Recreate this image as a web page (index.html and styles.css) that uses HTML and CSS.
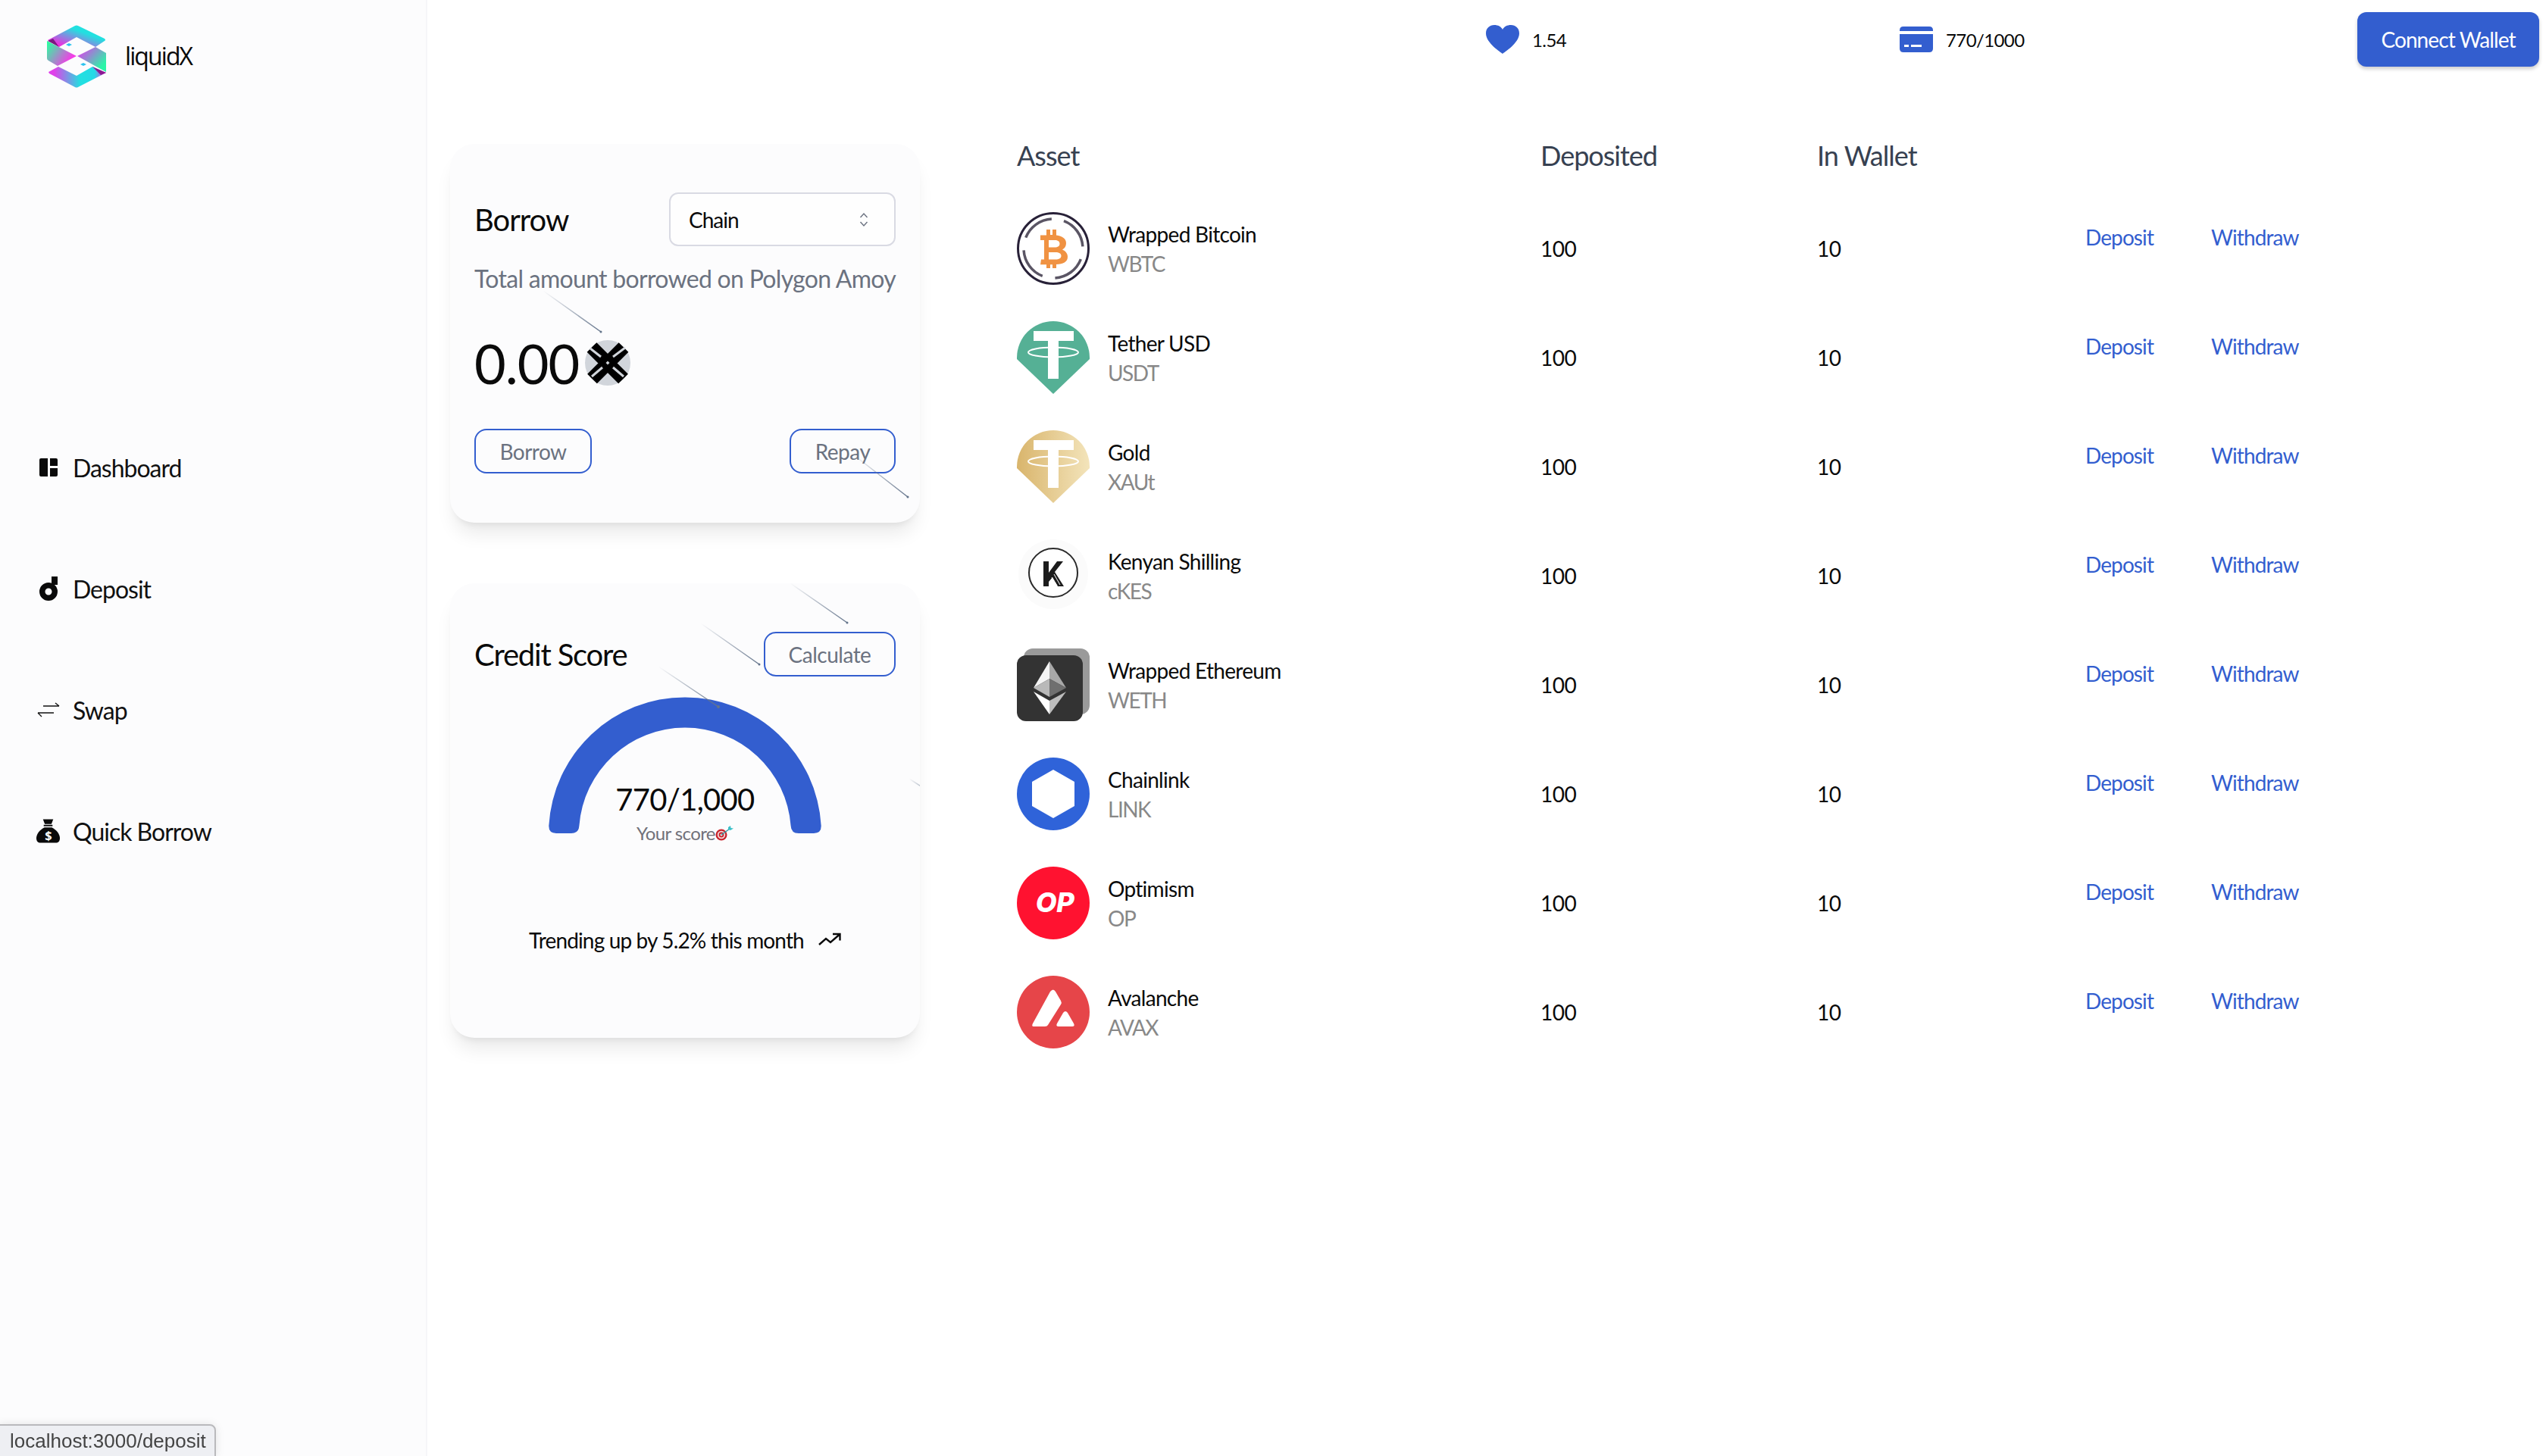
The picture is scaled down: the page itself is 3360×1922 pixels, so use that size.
FILE: index.html
```html
<!DOCTYPE html>
<html lang="en">
<head>
<meta charset="utf-8">
<title>liquidX</title>
<link rel="stylesheet" href="styles.css">
</head>
<body>
<div class="app">
  <aside class="sidebar">
    <div class="brand">
      <svg class="brand-logo" viewBox="62 33 78 83" width="78" height="83">
        <defs>
          <linearGradient id="lgA" x1="0" y1="1" x2="1" y2="0"><stop offset="0.1" stop-color="#ff1fe0"/><stop offset="0.65" stop-color="#22e0e0"/></linearGradient>
          <linearGradient id="lgB" x1="0" y1="0" x2="1" y2="0.6"><stop offset="0.05" stop-color="#2bff9f"/><stop offset="0.9" stop-color="#f23ee6"/></linearGradient>
          <linearGradient id="lgC" x1="0" y1="0.1" x2="1" y2="0.9"><stop offset="0.1" stop-color="#d04be8"/><stop offset="0.85" stop-color="#2bf5a8"/></linearGradient>
          <linearGradient id="lgD" x1="0" y1="0" x2="1" y2="0"><stop offset="0.1" stop-color="#e040ea"/><stop offset="0.55" stop-color="#22e0e0"/><stop offset="0.8" stop-color="#25d9e6"/><stop offset="1" stop-color="#f92be0"/></linearGradient>
        </defs>
        <path d="M99 34 Q101 33 103 34 L138 51 Q140 53 138 54 L126 62 L101 49 L78 62 L63 53 Z" fill="url(#lgA)"/>
        <path d="M62 54 L101 74 L76 87 L64 80 Q62 79 62 77 Z" fill="url(#lgB)"/>
        <path d="M63 54 L70 51 L78 62 Z" fill="#7a1a80"/>
        <path d="M102 74 L126 62 L140 70 L140 95 Z" fill="url(#lgC)"/>
        <path d="M64 95 L77 88 L101 100 L122 88 L140 96 L103 115 Q101 116 99 115 L65 97 Z" fill="url(#lgD)"/>
        <path d="M122 88 L140 96 L133 99 Z" fill="#8a1a90"/>
        <path d="M91 57 L95 59 L91 61 L87 59 Z M110 83 L114 85 L110 87 L106 85 Z" fill="#2cc4ee"/>
      </svg>
      <span class="brand-name">liquidX</span>
    </div>
    <nav class="nav">
      <a class="nav-item">
        <span class="nav-icon"><svg viewBox="0 0 24 24" width="24" height="24"><path d="M2 0H11V24H2Q0 24 0 22V2Q0 0 2 0ZM14 0H22Q24 0 24 2V10H14ZM14 13H24V22Q24 24 22 24H14Z" fill="#0a0a0a"/></svg></span>
        <span>Dashboard</span>
      </a>
      <a class="nav-item">
        <span class="nav-icon"><svg viewBox="0 0 24 32" width="24" height="32"><path fill-rule="evenodd" d="M12 8A12 12 0 1 1 12 32A12 12 0 1 1 12 8ZM12 15.500A4.500 4.500 0 1 0 12 24.500A4.500 4.500 0 1 0 12 15.500Z" fill="#0a0a0a"/><rect x="16" y="0" width="8" height="11" fill="#0a0a0a"/></svg></span>
        <span>Deposit</span>
      </a>
      <a class="nav-item">
        <span class="nav-icon"><svg viewBox="0 0 30 20" width="30" height="20"><path d="M8 5H29M24 1L29 5M1 14H22M1 14L6 19" fill="none" stroke="#111" stroke-width="1.300"/></svg></span>
        <span>Swap</span>
      </a>
      <a class="nav-item">
        <span class="nav-icon"><svg viewBox="0 0 32 32" width="32" height="32"><path d="M9 0H23L20.500 6.500H11.500Z" fill="#0a0a0a"/><rect x="10" y="7.500" width="12" height="2" fill="#0a0a0a"/><path d="M11 11H21C27 14 32 20 32 25.500C32 30 30 32 26 32H6C2 32 0 30 0 25.500C0 20 5 14 11 11Z" fill="#0a0a0a"/><text x="16" y="28" class="bag-sign">$</text></svg></span>
        <span>Quick Borrow</span>
      </a>
    </nav>
  </aside>

  <div class="main">
    <header class="topbar">
      <div class="stat stat-health">
        <svg viewBox="0 0 44 38" width="44" height="38"><path d="M22 38C20 36 0 24 0 11C0 4 5 0 11 0C16 0 20 2 22 6C24 2 28 0 33 0C39 0 44 4 44 11C44 24 24 36 22 38Z" fill="#335ecf"/></svg>
        <span>1.54</span>
      </div>
      <div class="stat stat-score">
        <svg viewBox="0 0 44 34" width="44" height="34"><path d="M5 0H39Q44 0 44 5V6H0V5Q0 0 5 0ZM0 10H44V29Q44 34 39 34H5Q0 34 0 29ZM6 24V27H12V24ZM15 24V27H29V24Z" fill="#335ecf" fill-rule="evenodd"/></svg>
        <span>770/1000</span>
      </div>
      <button class="connect">Connect Wallet</button>
    </header>

    <div class="content">
      <div class="cards">
        <section class="card card-borrow">
          <svg class="meteors" viewBox="0 0 620 500" aria-hidden="true">
            <defs>
              <linearGradient id="m1" gradientUnits="userSpaceOnUse" x1="123" y1="194" x2="199" y2="248"><stop offset="0" stop-color="#64748b" stop-opacity="0"/><stop offset="1" stop-color="#64748b"/></linearGradient>
              <linearGradient id="m2" gradientUnits="userSpaceOnUse" x1="532" y1="410" x2="604" y2="466"><stop offset="0" stop-color="#64748b" stop-opacity="0"/><stop offset="1" stop-color="#64748b"/></linearGradient>
            </defs>
            <line x1="123" y1="194" x2="199" y2="248" stroke="url(#m1)" stroke-width="1.500"/><circle cx="199" cy="248" r="1.500" fill="#64748b"/>
            <line x1="532" y1="410" x2="604" y2="466" stroke="url(#m2)" stroke-width="1.500"/><circle cx="604" cy="466" r="1.500" fill="#64748b"/>
          </svg>
          <div class="card-row borrow-head">
            <h2 class="card-title">Borrow</h2>
            <div class="select"><span>Chain</span>
              <svg viewBox="0 0 12 20" width="12" height="20"><path d="M1.500 7L6 2L10.500 7M1.500 13L6 18L10.500 13" fill="none" stroke="#6b7280" stroke-width="1.400"/></svg>
            </div>
          </div>
          <p class="card-sub">Total amount borrowed on Polygon Amoy</p>
          <div class="amount">
            <span>0.00</span>
            <svg viewBox="0 0 60 60" width="60" height="60">
              <circle cx="30" cy="30" r="30" fill="#d1d5db"/>
              <path d="M9 9.500L50.500 51M51 9.500L9.500 51" stroke="#000" stroke-width="18" fill="none"/>
              <path d="M7 11L21 22M53 10L37 22M9 48L23 36M37 36L51 48" stroke="#d1d5db" stroke-width="3" fill="none"/>
              <path d="M30 27.500L32.500 30L30 32.500L27.500 30Z" fill="#d1d5db"/>
            </svg>
          </div>
          <div class="card-row actions">
            <button class="btn-outline btn-borrow">Borrow</button>
            <button class="btn-outline btn-repay">Repay</button>
          </div>
        </section>

        <section class="card card-credit">
          <svg class="meteors" viewBox="0 0 620 600" aria-hidden="true">
            <defs>
              <linearGradient id="m3" gradientUnits="userSpaceOnUse" x1="449" y1="0" x2="524" y2="52"><stop offset="0" stop-color="#64748b" stop-opacity="0"/><stop offset="1" stop-color="#64748b"/></linearGradient>
              <linearGradient id="m4" gradientUnits="userSpaceOnUse" x1="331" y1="53" x2="408" y2="107"><stop offset="0" stop-color="#64748b" stop-opacity="0"/><stop offset="1" stop-color="#64748b"/></linearGradient>
              <linearGradient id="m6" gradientUnits="userSpaceOnUse" x1="606" y1="258" x2="640" y2="280"><stop offset="0" stop-color="#64748b" stop-opacity="0"/><stop offset="1" stop-color="#64748b"/></linearGradient>
            </defs>
            <line x1="449" y1="0" x2="524" y2="52" stroke="url(#m3)" stroke-width="1.500"/><circle cx="524" cy="52" r="1.500" fill="#64748b"/>
            <line x1="331" y1="53" x2="408" y2="107" stroke="url(#m4)" stroke-width="1.500"/><circle cx="408" cy="107" r="1.500" fill="#64748b"/>
            <line x1="606" y1="258" x2="640" y2="280" stroke="url(#m6)" stroke-width="1.500"/>
          </svg>
          <div class="card-row credit-head">
            <h2 class="card-title title-credit">Credit Score</h2>
            <button class="btn-outline btn-calc">Calculate</button>
          </div>
          <div class="gauge">
            <svg class="gauge-arc" viewBox="0 0 360 180" width="360" height="180">
              <path d="M0.300 170A180 180 0 0 1 359.700 170Q360 180 350 180H330Q320 180 319.600 170A140 140 0 0 0 40.400 170Q40 180 30 180H10Q0 180 0.300 170Z" fill="#335ecf"/>
            </svg>
            <svg class="gauge-meteor" viewBox="0 0 100 70" width="100" height="70" aria-hidden="true">
              <defs><linearGradient id="m7" gradientUnits="userSpaceOnUse" x1="2" y1="2" x2="81" y2="55"><stop offset="0" stop-color="#64748b" stop-opacity="0"/><stop offset="1" stop-color="#64748b"/></linearGradient></defs>
              <path d="M2 2L81 55" stroke="url(#m7)" stroke-width="1.500" fill="none"/><circle cx="81" cy="55" r="2" fill="#64748b"/>
            </svg>
            <div class="gauge-value">770/1,000</div>
            <div class="gauge-label"><span>Your score</span><svg viewBox="0 0 24 20" width="24" height="20"><circle cx="8" cy="12" r="7.500" fill="#c8232c"/><circle cx="8" cy="12" r="5.200" fill="#f4d9d9"/><circle cx="8" cy="12" r="3.400" fill="#c8232c"/><circle cx="8" cy="12" r="1.500" fill="#f2f2f2"/><path d="M8 12L19 4" stroke="#2f9aa3" stroke-width="1.500"/><path d="M17 2L20 0L20.500 3L24 3.500L20 6L17 5Z" fill="#3cc0c8"/></svg></div>
          </div>
          <div class="trend">
            <span>Trending up by 5.2% this month</span>
            <svg viewBox="0 0 30 20" width="30" height="20"><path d="M1 16L10 8L16 13L28 2.500M19 2H28.500V10.500" fill="none" stroke="#0a0a0a" stroke-width="2.400"/></svg>
          </div>
        </section>
      </div>

      <div class="assets">
        <div class="asset-row asset-head">
          <div>Asset</div><div>Deposited</div><div>In Wallet</div><div></div>
        </div>

        <div class="asset-row">
          <div class="asset-cell">
            <svg class="token" viewBox="0 0 96 96">
              <circle cx="48" cy="48" r="46.500" fill="none" stroke="#282138" stroke-width="3"/>
              <circle cx="48" cy="48" r="39" fill="none" stroke="#5a5564" stroke-width="3.500" stroke-dasharray="44.300 17"  transform="rotate(-69 48 48)"/>
              <path fill="#f09242" fill-rule="evenodd" d="M39 23H44V30H47V23H52V30.500C60 31.500 65 35 65 41C65 45 63 48 60 49.500C64 51 67 54.500 67 59C67 66 61 68.500 52 69V74H47V69.200H44V74H39V69.200H31L32 62.500H36V37H31V30.500H39ZM42 37V46.500H50C54 46.500 56.500 45 56.500 41.800C56.500 38.500 54 37 50 37ZM42 53V62.500H51C55.500 62.500 58.500 61 58.500 57.800C58.500 54.500 55.500 53 51 53Z"/>
            </svg>
            <div class="asset-text"><div class="asset-name">Wrapped Bitcoin</div><div class="asset-sym">WBTC</div></div>
          </div>
          <div>100</div><div>10</div>
          <div class="asset-links"><a>Deposit</a><a>Withdraw</a></div>
        </div>

        <div class="asset-row">
          <div class="asset-cell">
            <svg class="token" viewBox="0 0 96 96">
              <path d="M48 0A48 48 0 0 1 96 48V50L48 96L0 50V48A48 48 0 0 1 48 0Z" fill="#55b095"/>
              <path d="M22 13H75V26H55V76H41V26H22Z" fill="#fff"/>
              <ellipse cx="48" cy="41" rx="33" ry="6.500" fill="none" stroke="#fff" stroke-width="2"/>
            </svg>
            <div class="asset-text"><div class="asset-name">Tether USD</div><div class="asset-sym">USDT</div></div>
          </div>
          <div>100</div><div>10</div>
          <div class="asset-links"><a>Deposit</a><a>Withdraw</a></div>
        </div>

        <div class="asset-row">
          <div class="asset-cell">
            <svg class="token" viewBox="0 0 96 96">
              <defs><linearGradient id="gold" x1="0" y1="0" x2="1" y2="0"><stop offset="0" stop-color="#d9b56c"/><stop offset="1" stop-color="#f3e4bb"/></linearGradient></defs>
              <path d="M48 0A48 48 0 0 1 96 48V50L48 96L0 50V48A48 48 0 0 1 48 0Z" fill="url(#gold)"/>
              <path d="M22 13H75V26H55V76H41V26H22Z" fill="#fff"/>
              <ellipse cx="48" cy="41" rx="33" ry="6.500" fill="none" stroke="#fff" stroke-width="2"/>
            </svg>
            <div class="asset-text"><div class="asset-name">Gold</div><div class="asset-sym">XAUt</div></div>
          </div>
          <div>100</div><div>10</div>
          <div class="asset-links"><a>Deposit</a><a>Withdraw</a></div>
        </div>

        <div class="asset-row">
          <div class="asset-cell">
            <svg class="token" viewBox="0 0 96 96">
              <circle cx="48" cy="46" r="46" fill="#fbfbfb"/>
              <circle cx="48" cy="44" r="32" fill="#fff" stroke="#2a2a2a" stroke-width="2"/>
              <path d="M35 29H42V44L53 29H61L50 43L62 62H54L47 50L42 56V62H35Z" fill="#1c1c1c"/>
              <path d="M46 50L53 61M49 46L57 60" stroke="#fff" stroke-width="1"/>
            </svg>
            <div class="asset-text"><div class="asset-name">Kenyan Shilling</div><div class="asset-sym">cKES</div></div>
          </div>
          <div>100</div><div>10</div>
          <div class="asset-links"><a>Deposit</a><a>Withdraw</a></div>
        </div>

        <div class="asset-row">
          <div class="asset-cell">
            <svg class="token" viewBox="0 0 96 96">
              <rect x="9" y="0" width="87" height="87" rx="12" fill="#9a9a9a"/>
              <rect x="0" y="9" width="87" height="87" rx="12" fill="#333"/>
              <path d="M43 17L22 52L43 40Z" fill="#f4f4f4"/>
              <path d="M43 17L65 52L43 40Z" fill="#a8a8a8"/>
              <path d="M43 40L22 52L43 64Z" fill="#b9b9b9"/>
              <path d="M43 40L65 52L43 64Z" fill="#6f6f6f"/>
              <path d="M22 57L43 69V87Z" fill="#fff"/>
              <path d="M65 57L43 69V87Z" fill="#bdbdbd"/>
            </svg>
            <div class="asset-text"><div class="asset-name">Wrapped Ethereum</div><div class="asset-sym">WETH</div></div>
          </div>
          <div>100</div><div>10</div>
          <div class="asset-links"><a>Deposit</a><a>Withdraw</a></div>
        </div>

        <div class="asset-row">
          <div class="asset-cell">
            <svg class="token" viewBox="0 0 96 96">
              <circle cx="48" cy="48" r="48" fill="#2f63d9"/>
              <path d="M48 16L76 32V64L48 80L20 64V32Z" fill="#fff"/>
            </svg>
            <div class="asset-text"><div class="asset-name">Chainlink</div><div class="asset-sym">LINK</div></div>
          </div>
          <div>100</div><div>10</div>
          <div class="asset-links"><a>Deposit</a><a>Withdraw</a></div>
        </div>

        <div class="asset-row">
          <div class="asset-cell">
            <svg class="token" viewBox="0 0 96 96">
              <circle cx="48" cy="48" r="48" fill="#ff1230"/>
              <text x="50" y="60" class="op-mark">OP</text>
            </svg>
            <div class="asset-text"><div class="asset-name">Optimism</div><div class="asset-sym">OP</div></div>
          </div>
          <div>100</div><div>10</div>
          <div class="asset-links"><a>Deposit</a><a>Withdraw</a></div>
        </div>

        <div class="asset-row">
          <div class="asset-cell">
            <svg class="token" viewBox="0 0 96 96">
              <circle cx="48" cy="48" r="48" fill="#e64549"/>
              <path d="M44 21Q48 16 51 21L58 33Q59.500 35.500 58 38L41 65Q40 67 37 67H22Q19 67 21 63Z" fill="#fff"/>
              <path d="M61 49Q64 45 67 49L75 63Q77 67 73 67H55Q51 67 53 63Z" fill="#fff"/>
            </svg>
            <div class="asset-text"><div class="asset-name">Avalanche</div><div class="asset-sym">AVAX</div></div>
          </div>
          <div>100</div><div>10</div>
          <div class="asset-links"><a>Deposit</a><a>Withdraw</a></div>
        </div>
      </div>
    </div>
  </div>
</div>
<div class="status-tip">localhost:3000/deposit</div>
</body>
</html>
```
FILE: styles.css
```css
* { box-sizing: border-box; }
html, body { margin: 0; height: 100%; }
body {
  background: #fff;
  color: #0a0a0a;
  font-family: "Lato", "Open Sans", sans-serif;
  font-size: 28px;
  overflow: hidden;
}
h2, p { margin: 0; }
button { font-family: inherit; background: none; cursor: pointer; }

.app { display: flex; height: 1922px; }

.sidebar {
  width: 564px;
  flex: none;
  background: #fcfcfd;
  border-right: 2px solid #f6f6f8;
  padding-left: 48px;
}
.brand {
  display: flex;
  align-items: center;
  gap: 25px;
  height: 83px;
  margin-top: 33px;
  padding-left: 14px;
}
.brand-name { font-family: "Open Sans", sans-serif; font-size: 32px; letter-spacing: -1.9px; padding-bottom: 3px; }
.nav {
  display: flex;
  flex-direction: column;
  gap: 100px;
  margin-top: 471px;
}
.nav-item {
  display: flex;
  align-items: center;
  height: 60px;
  font-size: 32px;
  letter-spacing: -1px;
  color: #111;
}
.nav-icon { width: 48px; display: flex; justify-content: center; padding-right: 17px; }
.bag-sign { font: 700 17px "Open Sans", sans-serif; fill: #fff; text-anchor: middle; }

.main { flex: 1; min-width: 0; }
.topbar {
  display: flex;
  align-items: center;
  height: 104px;
  padding-left: 1397px;
}
.stat { display: flex; align-items: center; font-size: 24px; gap: 17px; letter-spacing: -0.6px; }
.stat-health { width: 546px; }
.stat-score { width: 604px; }
.connect {
  width: 240px;
  height: 72px;
  border: 0;
  border-radius: 12px;
  background: #335ecf;
  color: #fff;
  font-size: 28px;
  letter-spacing: -0.9px;
  box-shadow: 0 3px 5px rgba(0,0,0,.2);
}

.content { display: flex; gap: 128px; padding: 50px 0 0 30px; }
.cards { width: 620px; flex: none; padding-top: 36px; display: flex; flex-direction: column; gap: 80px; }
.card {
  position: relative;
  background: #fcfcfd;
  border-radius: 32px;
  padding: 0 32px;
  box-shadow: 0 20px 25px -5px rgba(0,0,0,.08), 0 8px 10px -6px rgba(0,0,0,.08);
}
.meteors { position: absolute; left: 0; top: 0; width: 100%; height: 100%; pointer-events: none; overflow: hidden; border-radius: 32px; z-index: 2; }
.card-borrow { height: 500px; }
.card-credit { height: 600px; }
.card-row { display: flex; align-items: center; justify-content: space-between; }
.card-title { font-size: 40px; font-weight: 400; color: #0a0a0a; letter-spacing: -1px; }
.title-credit { letter-spacing: -1.2px; }
.borrow-head { padding-top: 64px; }
.select {
  width: 299px;
  height: 71px;
  display: flex;
  align-items: center;
  justify-content: space-between;
  padding: 0 34px 0 24px;
  border: 2px solid #d9dae3;
  border-radius: 12px;
  background: #fefefe;
  letter-spacing: -1px;
}
.card-sub { margin-top: 23px; font-size: 32px; line-height: 40px; color: #6b7280; white-space: nowrap; letter-spacing: -0.7px; }
.amount { display: flex; align-items: center; gap: 8px; margin-top: 51px; font-size: 72px; line-height: 80px; letter-spacing: -1px; }
.actions { margin-top: 47px; }
.btn-outline {
  height: 59px;
  border: 2px solid #335ecf;
  border-radius: 16px;
  color: #6b7280;
  font-size: 28px;
  padding: 0;
  letter-spacing: -0.5px;
}
.btn-borrow { width: 155px; }
.btn-repay { width: 140px; }
.btn-calc { width: 174px; }
.credit-head { padding-top: 64px; }
.gauge { position: relative; width: 360px; margin: 27px auto 0; text-align: center; }
.gauge-arc { display: block; overflow: visible; }
.gauge-meteor { position: absolute; left: 143px; top: -42px; overflow: visible; }
.gauge-value { position: absolute; left: 0; right: 0; top: 110px; font-size: 40px; line-height: 50px; letter-spacing: -0.7px; }
.gauge-label {
  position: absolute; left: 0; right: 0; top: 165px;
  display: flex; align-items: center; justify-content: center;
  font-size: 24px; line-height: 30px; color: #71717a; letter-spacing: -0.6px;
}
.trend {
  display: flex;
  align-items: center;
  justify-content: center;
  gap: 19px;
  margin-top: 124px;
  font-size: 28px;
  letter-spacing: -0.85px;
}

.assets { flex: none; width: 1700px; }
.asset-row {
  display: grid;
  grid-template-columns: 691px 365px 354px 1fr;
  align-items: center;
  height: 144px;
  font-size: 28px;
  letter-spacing: -0.5px;
}
.asset-head { height: 102px; font-size: 36px; color: #374151; letter-spacing: -1px; }
.asset-cell { display: flex; align-items: center; gap: 24px; }
.token { width: 96px; height: 96px; flex: none; display: block; }
.asset-name { font-size: 28px; line-height: 40px; color: #0a0a0a; letter-spacing: -0.7px; }
.asset-sym { font-size: 28px; line-height: 38px; color: #888; letter-spacing: -1.5px; }
.asset-links { display: flex; gap: 76px; padding-bottom: 30px; color: #335ecf; letter-spacing: -0.9px; }
.op-mark { font: italic 800 36px "Inter", sans-serif; fill: #fff; text-anchor: middle; }

.status-tip {
  position: fixed;
  left: -2px;
  bottom: -2px;
  width: 287px;
  height: 44px;
  padding-left: 13px;
  background: #eeeff3;
  border: 2px solid #b9b9bc;
  border-radius: 0 8px 0 0;
  font: 26px/40px "Liberation Sans", sans-serif;
  color: #444;
  white-space: nowrap;
  box-shadow: 0 0 12px rgba(0,0,0,.1);
}
```
